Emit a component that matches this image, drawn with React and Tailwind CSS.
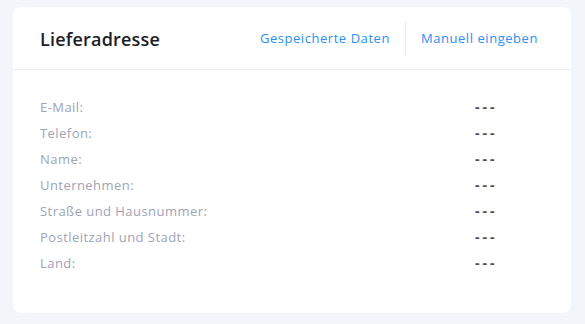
import React from 'react';

const rows = [
    'E-Mail:',
    'Telefon:',
    'Name:',
    'Unternehmen:',
    'Straße und Hausnummer:',
    'Postleitzahl und Stadt:',
    'Land:',
];

const App = () => {
    return (
        <div className="min-h-[324px] w-full bg-[#f2f5f9] px-[13px] pt-[7px] pb-3" style={{ fontFamily: "'Open Sans', 'Liberation Sans', sans-serif" }}>
            <div className="w-[558px] rounded-lg bg-white">
                <div className="flex h-[63px] items-center justify-between border-b border-[#e9ecf0] pt-[2px] pl-[27px] pr-[33px]">
                    <h2 className="text-[18px] font-semibold tracking-[0.2px] text-[#1b1d29]">Lieferadresse</h2>
                    <div className="flex h-[36px] items-center text-[13px] tracking-[0.55px] text-[#2b90f5]">
                        <span className="pr-[15px]">Gespeicherte Daten</span>
                        <span className="h-full w-px bg-[#e9ecf0]"></span>
                        <span className="pl-[15px]">Manuell eingeben</span>
                    </div>
                </div>
                <div className="flex flex-col pt-[25px] pb-[36px] pl-[27px]">
                    {rows.map((label) => (
                        <div key={label} className="flex h-[26px] items-baseline pt-[1px] text-[13px]">
                            <span className="w-[435px] tracking-[0.45px] text-[#9ea3b5]">{label}</span>
                            <span className="text-[14px] font-bold tracking-[3px] text-[#4a4d57]">---</span>
                        </div>
                    ))}
                </div>
            </div>
        </div>
    )
}

export default App
